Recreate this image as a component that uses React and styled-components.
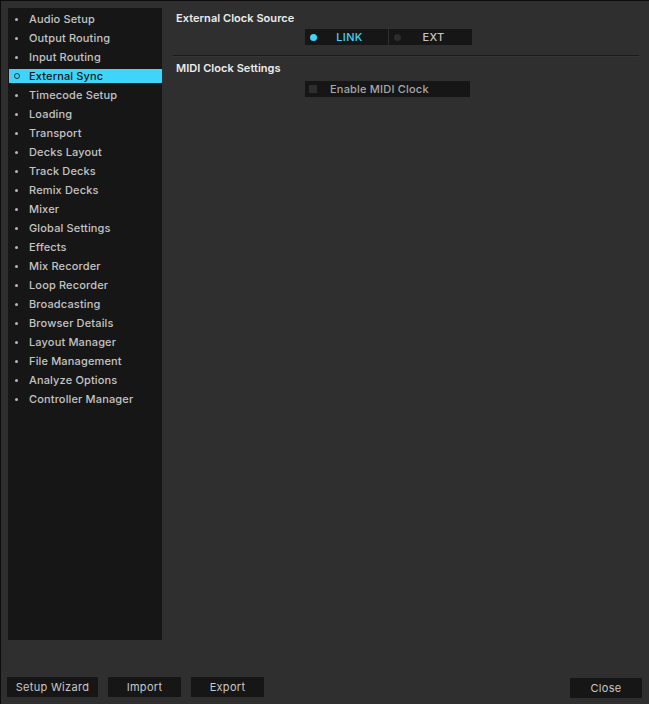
import React from 'react';
import styled, { createGlobalStyle } from 'styled-components';

const GlobalStyle = createGlobalStyle`
  html, body {
    margin: 0;
    padding: 0;
    background: #2f2f2f;
  }
  * {
    box-sizing: border-box;
  }
`;

const Frame = styled.div`
  width: 649px;
  height: 704px;
  border-top: 1px solid #0c0c0c;
  border-left: 1px solid #0c0c0c;
  background: #2f2f2f;
  display: flex;
  flex-direction: column;
  font-family: Inter, "Liberation Sans", Arial, sans-serif;
  font-size: 11px;
  font-weight: 500;
`;

const Main = styled.div`
  display: flex;
  padding: 7px 0 0 7px;
`;

const Sidebar = styled.ul`
  list-style: none;
  margin: 0;
  padding: 4px 0 0 1px;
  width: 154px;
  height: 632px;
  background: #161616;
`;

const NavItem = styled.li`
  display: flex;
  align-items: center;
  height: 14px;
  margin-bottom: 5px;
  padding-left: 5px;
  background: ${p => (p.$active ? '#3fd5fa' : 'transparent')};
  color: ${p => (p.$active ? '#141414' : '#c4c4c4')};
  letter-spacing: 0.15px;
  white-space: nowrap;
`;

const Bullet = styled.span`
  width: ${p => (p.$active ? '6px' : '3px')};
  height: ${p => (p.$active ? '6px' : '3px')};
  margin-left: ${p => (p.$active ? '0' : '1px')};
  margin-right: ${p => (p.$active ? '9px' : '11px')};
  border-radius: 50%;
  background: ${p => (p.$active ? 'transparent' : '#b8b8b8')};
  border: ${p => (p.$active ? '1.5px solid #333' : 'none')};
`;

const Content = styled.section`
  flex: 1;
  padding: 0 10px 0 11px;
`;

const Heading = styled.h2`
  margin: ${p => (p.$after ? '4px' : '3px')} 0 0;
  padding-left: 3px;
  font-size: 11px;
  font-weight: 600;
  line-height: 14px;
  color: #ececec;
  letter-spacing: 0.05px;
`;

const Segmented = styled.div`
  display: flex;
  width: 167px;
  height: 16px;
  margin: 4px 0 0 132px;
  background: #161616;
`;

const Segment = styled.div`
  flex: 1;
  display: flex;
  align-items: center;
  padding-left: 5px;
  color: ${p => (p.$on ? '#3fd5fa' : '#c4c4c4')};
  & + & {
    border-left: 1px solid #2f2f2f;
  }
`;

const Dot = styled.span`
  width: 7px;
  height: 7px;
  border-radius: 50%;
  background: ${p => (p.$on ? '#3fd5fa' : '#2c2c2c')};
`;

const SegLabel = styled.span`
  flex: 1;
  text-align: center;
  padding-right: 6px;
  letter-spacing: 0.3px;
`;

const Divider = styled.hr`
  margin: 10px 0 0;
  border: 0;
  border-top: 1px solid #1b1b1b;
  border-bottom: 1px solid #363636;
`;

const CheckRow = styled.label`
  display: flex;
  align-items: center;
  width: 165px;
  height: 16px;
  margin: 6px 0 0 132px;
  padding-left: 4px;
  background: #161616;
  color: #a8a8a8;
  letter-spacing: 0.2px;
`;

const Box = styled.span`
  width: 8px;
  height: 8px;
  margin-right: 13px;
  background: #2e2e2e;
`;

const Footer = styled.footer`
  display: flex;
  gap: 10px;
  padding: 37px 7px 0 6px;
`;

const Button = styled.button`
  height: 20px;
  width: ${p => p.$w}px;
  margin-left: ${p => (p.$push ? 'auto' : '0')};
  margin-top: ${p => (p.$push ? '1px' : '0')};
  border: 0;
  padding: 0;
  background: #161616;
  color: #c8c8c8;
  font-family: Inter, "Liberation Sans", Arial, sans-serif;
  font-size: 11px;
  font-weight: 400;
  letter-spacing: 0.3px;
`;

const items = [
  'Audio Setup', 'Output Routing', 'Input Routing', 'External Sync', 'Timecode Setup',
  'Loading', 'Transport', 'Decks Layout', 'Track Decks', 'Remix Decks', 'Mixer',
  'Global Settings', 'Effects', 'Mix Recorder', 'Loop Recorder', 'Broadcasting',
  'Browser Details', 'Layout Manager', 'File Management', 'Analyze Options',
  'Controller Manager',
];

export default function App() {
  return (
    <>
      <GlobalStyle />
      <Frame>
        <Main>
          <Sidebar>
            {items.map(name => {
              const active = name === 'External Sync';
              return (
                <NavItem key={name} $active={active}>
                  <Bullet $active={active} />
                  {name}
                </NavItem>
              );
            })}
          </Sidebar>
          <Content>
            <Heading>External Clock Source</Heading>
            <Segmented>
              <Segment $on>
                <Dot $on />
                <SegLabel>LINK</SegLabel>
              </Segment>
              <Segment>
                <Dot />
                <SegLabel>EXT</SegLabel>
              </Segment>
            </Segmented>
            <Divider />
            <Heading $after>MIDI Clock Settings</Heading>
            <CheckRow>
              <Box />
              Enable MIDI Clock
            </CheckRow>
          </Content>
        </Main>
        <Footer>
          <Button $w={91}>Setup Wizard</Button>
          <Button $w={73}>Import</Button>
          <Button $w={73}>Export</Button>
          <Button $w={72} $push>Close</Button>
        </Footer>
      </Frame>
    </>
  );
}
